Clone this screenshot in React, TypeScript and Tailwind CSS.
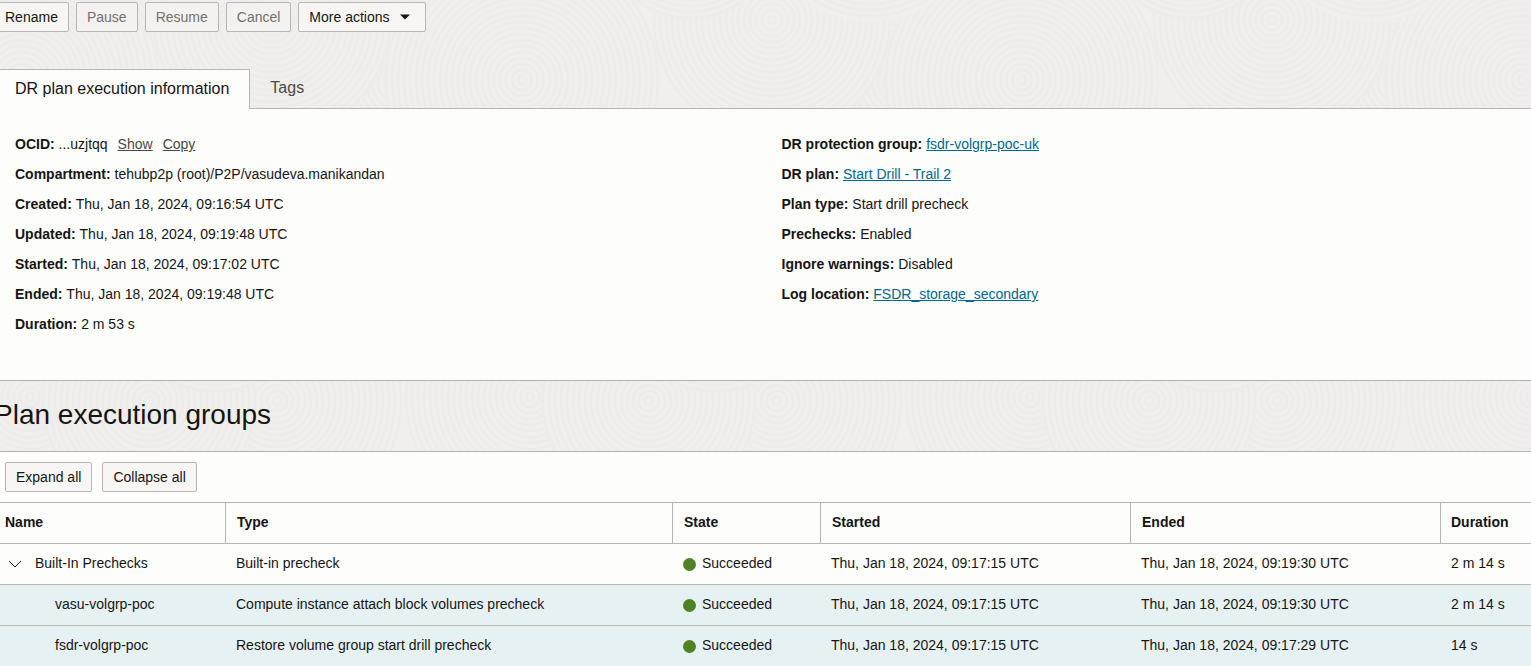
import { useState } from 'react';
import type { ReactNode } from 'react';

type Disc = { cx: number; cy: number; r: number };

const headerDiscs: Disc[] = [
  { cx: 400, cy: 82, r: 150 },
  { cx: -100, cy: 82, r: 150 },
  { cx: 22, cy: 80, r: 138 },
  { cx: 522, cy: 80, r: 138 },
  { cx: 272, cy: 20, r: 120 },
  { cx: 190, cy: -70, r: 90 },
  { cx: 370, cy: -90, r: 112 },
];

const groupDiscs: Disc[] = [
  { cx: 277, cy: 20, r: 126 },
  { cx: 30, cy: 16, r: 126 },
  { cx: 530, cy: 16, r: 126 },
  { cx: 149, cy: 20, r: 108 },
  { cx: 215, cy: -90, r: 102 },
];

// sand garden texture, repeats every 500px
const Ripples = ({ id, discs }: { id: string; discs: Disc[] }) => (
  <svg className="absolute inset-0 h-full w-full" aria-hidden="true">
    <defs>
      <pattern id={id} width="500" height="240" patternUnits="userSpaceOnUse">
        {discs.map((disc, i) => (
          <g key={i}>
            <circle cx={disc.cx} cy={disc.cy} r={disc.r} fill="#f0efed" />
            {Array.from({ length: Math.floor(disc.r / 6) }, (_, n) => (
              <circle key={n} cx={disc.cx} cy={disc.cy} r={(n + 1) * 6 - 2} fill="none" stroke="#edecea" strokeWidth="2.5" />
            ))}
          </g>
        ))}
      </pattern>
    </defs>
    <rect width="100%" height="100%" fill={`url(#${id})`} />
  </svg>
);

const buttonClass =
  'h-[30px] rounded-[2px] border border-[#bab5b0] bg-[#f7f6f4] px-[10px] whitespace-nowrap disabled:bg-[#f3f2f0] disabled:text-[#73716f]';

const Button = ({ children, disabled, onClick }: { children: ReactNode; disabled?: boolean; onClick?: () => void }) => (
  <button type="button" className={buttonClass} disabled={disabled} onClick={onClick}>
    {children}
  </button>
);

const Detail = ({ label, children }: { label: string; children: ReactNode }) => (
  <div className="leading-[30px]">
    <dt className="inline font-bold">{label}:</dt> <dd className="inline">{children}</dd>
  </div>
);

const DetailLink = ({ children }: { children: ReactNode }) => (
  <a href="#" className="text-[#00688c] underline">{children}</a>
);

const steps = [
  { name: 'vasu-volgrp-poc', type: 'Compute instance attach block volumes precheck', ended: 'Thu, Jan 18, 2024, 09:19:30 UTC', duration: '2 m 14 s' },
  { name: 'fsdr-volgrp-poc', type: 'Restore volume group start drill precheck', ended: 'Thu, Jan 18, 2024, 09:17:29 UTC', duration: '14 s' },
];

const Cells = ({ type, ended, duration }: { type: string; ended: string; duration: string }) => (
  <>
    <td className="px-[10px]">{type}</td>
    <td className="px-[10px]">
      <span className="flex items-center gap-[6px]">
        <span className="mt-0.5 size-[13px] rounded-full bg-[#508223]" />
        Succeeded
      </span>
    </td>
    <td className="px-[10px]">Thu, Jan 18, 2024, 09:17:15 UTC</td>
    <td className="px-[10px]">{ended}</td>
    <td className="px-[10px]">{duration}</td>
  </>
);

export default function App() {
  const [open, setOpen] = useState(true);

  return (
    <main className="overflow-x-hidden bg-[#fdfdfc] font-['Liberation_Sans',Arial,sans-serif] text-[14px] leading-5 text-[#161513]">
      <header className="relative bg-[#f0efed]">
        <Ripples id="header-ripples" discs={headerDiscs} />
        <div className="relative -ml-1.5 flex gap-[7px] pt-[2px]">
          <Button>Rename</Button>
          <Button disabled>Pause</Button>
          <Button disabled>Resume</Button>
          <Button disabled>Cancel</Button>
          <Button>
            <span className="flex items-center gap-[9px] pr-1">
              More actions
              <svg width="12" height="6" viewBox="0 0 12 6" aria-hidden="true">
                <path d="M1 0.5h10L6 5.5z" fill="currentColor" />
              </svg>
            </span>
          </Button>
        </div>
        <div role="tablist" className="relative flex pt-[37px] text-[16px]">
          <button type="button" role="tab" aria-selected="true" className="h-10 border-t border-r border-[#bab5b0] bg-[#fdfdfc] pr-5 pb-0.5 pl-[15px]">
            DR plan execution information
          </button>
          <div className="flex-1 border-b border-[#bab5b0]">
            <button type="button" role="tab" aria-selected="false" className="h-[38px] px-5 text-[#4a4846]">
              Tags
            </button>
          </div>
        </div>
      </header>

      <section className="grid grid-cols-2 pt-5 pb-[41px]">
        <dl className="px-[15px]">
          <Detail label="OCID">
            ...uzjtqq
            <button type="button" className="ml-[10px] text-[#4a4846] underline">Show</button>
            <button type="button" className="ml-[10px] text-[#4a4846] underline">Copy</button>
          </Detail>
          <Detail label="Compartment">tehubp2p (root)/P2P/vasudeva.manikandan</Detail>
          <Detail label="Created">Thu, Jan 18, 2024, 09:16:54 UTC</Detail>
          <Detail label="Updated">Thu, Jan 18, 2024, 09:19:48 UTC</Detail>
          <Detail label="Started">Thu, Jan 18, 2024, 09:17:02 UTC</Detail>
          <Detail label="Ended">Thu, Jan 18, 2024, 09:19:48 UTC</Detail>
          <Detail label="Duration">2 m 53 s</Detail>
        </dl>
        <dl className="px-4">
          <Detail label="DR protection group"><DetailLink>fsdr-volgrp-poc-uk</DetailLink></Detail>
          <Detail label="DR plan"><DetailLink>Start Drill - Trail 2</DetailLink></Detail>
          <Detail label="Plan type">Start drill precheck</Detail>
          <Detail label="Prechecks">Enabled</Detail>
          <Detail label="Ignore warnings">Disabled</Detail>
          <Detail label="Log location"><DetailLink>FSDR_storage_secondary</DetailLink></Detail>
        </dl>
      </section>

      <div className="relative border-y border-[#b5b2b0] bg-[#f0efed] pt-4 pb-[18px]">
        <Ripples id="group-ripples" discs={groupDiscs} />
        <h2 className="relative -ml-1.5 text-[28px] leading-9">Plan execution groups</h2>
      </div>

      <div className="flex gap-[10px] px-[5px] py-[10px]">
        <Button onClick={() => setOpen(true)}>Expand all</Button>
        <Button onClick={() => setOpen(false)}>Collapse all</Button>
      </div>

      <table className="w-full table-fixed border-separate border-spacing-0 text-left [&_td]:h-[41px] [&_td]:border-t [&_td]:border-[#bab5b0] [&_td]:pb-0.5 [&_th]:h-[41px] [&_th]:border-t [&_th]:border-[#bab5b0] [&_th]:pb-0.5">
        <thead>
          <tr>
            <th className="w-[226px] border-r px-[5px]">Name</th>
            <th className="border-r px-[11px]">Type</th>
            <th className="w-[148px] border-r px-[11px]">State</th>
            <th className="w-[310px] border-r px-[11px]">Started</th>
            <th className="w-[310px] border-r px-[11px]">Ended</th>
            <th className="w-[90px] px-[10px]">Duration</th>
          </tr>
        </thead>
        <tbody>
          <tr>
            <td className="px-2">
              <button type="button" className="flex items-center gap-[13px]" aria-expanded={open} onClick={() => setOpen(!open)}>
                <svg width="14" height="8" viewBox="0 0 14 8" className="mt-0.5" aria-hidden="true">
                  <path d="M1 1l6 6 6-6" fill="none" stroke="currentColor" strokeWidth="1" />
                </svg>
                Built-In Prechecks
              </button>
            </td>
            <Cells type="Built-in precheck" ended="Thu, Jan 18, 2024, 09:19:30 UTC" duration="2 m 14 s" />
          </tr>
          {open && steps.map((step) => (
            <tr key={step.name} className="bg-[#e6f1f4]">
              <td className="pl-[55px]">{step.name}</td>
              <Cells type={step.type} ended={step.ended} duration={step.duration} />
            </tr>
          ))}
        </tbody>
      </table>
    </main>
  );
}
